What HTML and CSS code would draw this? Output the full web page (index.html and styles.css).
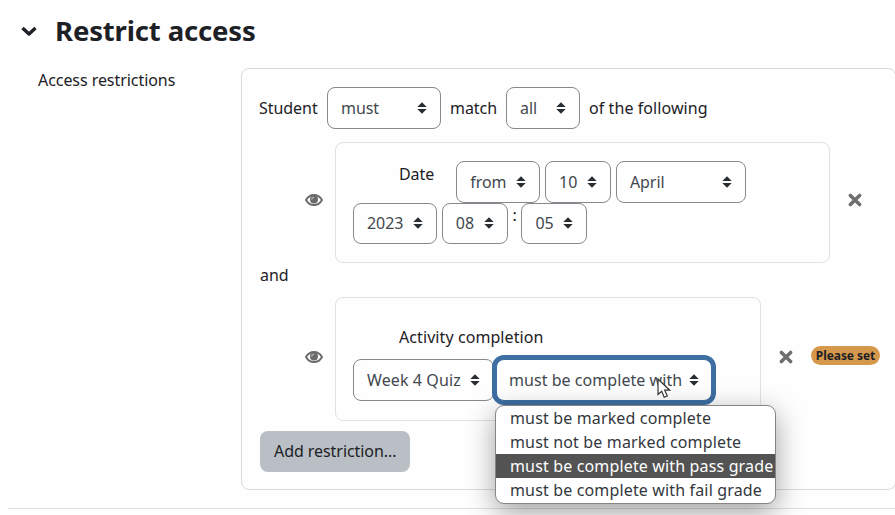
FILE: index.html
```html
<!DOCTYPE html>
<html lang="en">
<head>
<meta charset="utf-8">
<title>Restrict access</title>
<link rel="stylesheet" href="styles.css">
</head>
<body>
<svg class="defs" aria-hidden="true">
  <symbol id="sort" viewBox="0 0 10 12"><path d="M5 .2 9.700 5.100H.3zM5 11.800.3 6.900h9.400z" fill="#292e33"/></symbol>
  <symbol id="eye" viewBox="0 0 18 12"><path d="M1 6C4.800-.7 13.200-.7 17 6C13.200 12.700 4.800 12.700 1 6z" fill="#fefefe" stroke="#6a6a6a" stroke-width="1.900"/><circle cx="9" cy="5.600" r="4" fill="#6a6a6a"/><path d="M6.800 5.500C6.800 4.200 7.700 3.300 9 3.300" fill="none" stroke="#ddd" stroke-width="1"/></symbol>
  <symbol id="times" viewBox="0 0 14 14"><path d="M2.400 2.400l9.200 9.200M11.600 2.400l-9.200 9.200" stroke="#6e6e6e" stroke-width="3.500" stroke-linecap="round"/></symbol>
</svg>
<header class="heading">
  <svg class="chevron" viewBox="0 0 18 12"><path d="M2.500 3 9 9l6.500-6" fill="none" stroke="#1d2125" stroke-width="3.400" stroke-linejoin="round"/></svg>
  <h3>Restrict access</h3>
</header>
<main class="form-row">
  <div class="label">Access restrictions</div>
  <section class="panel">
    <div class="match-row">
      <span class="t-student">Student</span>
      <div class="select must">must<svg><use href="#sort"/></svg></div>
      <span class="t-match">match</span>
      <div class="select all">all<svg><use href="#sort"/></svg></div>
      <span class="t-following">of the following</span>
    </div>
    <div class="condition date">
      <svg class="eye"><use href="#eye"/></svg>
      <div class="box">
        <div class="line">
          <span class="title">Date</span>
          <div class="select from">from<svg><use href="#sort"/></svg></div>
          <div class="select two">10<svg><use href="#sort"/></svg></div>
          <div class="select month">April<svg><use href="#sort"/></svg></div>
        </div>
        <div class="line">
          <div class="select year">2023<svg><use href="#sort"/></svg></div>
          <div class="select two">08<svg><use href="#sort"/></svg></div>
          <span class="colon">:</span>
          <div class="select two">05<svg><use href="#sort"/></svg></div>
        </div>
      </div>
      <svg class="times"><use href="#times"/></svg>
    </div>
    <div class="and">and</div>
    <div class="condition completion">
      <svg class="eye"><use href="#eye"/></svg>
      <div class="box">
        <div class="title">Activity completion</div>
        <div class="line">
          <div class="select quiz">Week 4 Quiz<svg><use href="#sort"/></svg></div>
          <div class="select focus">must be complete with<svg><use href="#sort"/></svg>
            <svg class="cursor" viewBox="0 0 14 21"><path d="M1 1v15.500l3.700-3.300 2.500 6.100 3.100-1.300-2.600-5.800h5z" fill="#fff" stroke="#333" stroke-width="1.200"/></svg>
            <div class="menu">
              <div>must be marked complete</div>
              <div>must not be marked complete</div>
              <div class="active">must be complete with pass grade</div>
              <div>must be complete with fail grade</div>
            </div>
          </div>
        </div>
      </div>
      <svg class="times"><use href="#times"/></svg>
      <span class="badge">Please set</span>
    </div>
    <div class="button">Add restriction...</div>
  </section>
</main>
<hr>
</body>
</html>
```
FILE: styles.css
```css
* { box-sizing: border-box; }
body { margin: 0; height: 515px; overflow: hidden; background: #fefefe; color: #1d2125; font: 16px/24px "Noto Sans", sans-serif; letter-spacing: -.06px; white-space: nowrap; }
svg { flex: none; }
.defs { position: absolute; width: 0; height: 0; }
.heading { display: flex; align-items: center; height: 68px; padding: 0 0 6px 20px; }
.chevron { width: 18px; height: 12px; margin-right: 17px; }
h3 { margin: 0; font-size: 27.500px; line-height: 36px; letter-spacing: -.15px; }
.form-row { display: flex; }
.label { flex: none; width: 241px; padding-left: 38px; }
.panel { width: 655px; height: 422px; flex: none; border: 1px solid #d9dbdd; border-radius: 8px; padding: 18px 0 0 18px; }
.match-row { display: flex; align-items: center; }
.t-student { width: 67px; margin-left: -1px; letter-spacing: -.05px; }
.match-row .must { margin-left: 1px; }
.t-match { width: 65px; padding-left: 9px; }
.t-following { padding-left: 9px; letter-spacing: .08px; }
.select { position: relative; display: flex; align-items: center; justify-content: space-between; height: 42px; border: 1px solid #85898d; border-radius: 8px; padding: 0 13px; color: #42484e; background: #fefefe; flex: none; }
.select > svg:not(.cursor) { width: 10px; height: 12px; }
.must { width: 114px; }
.all { width: 74px; }
.condition { display: flex; align-items: center; }
.date { margin-top: 13px; }
.eye { width: 18px; height: 12px; margin: 0 12px 0 45px; }
.date .eye, .date .times { position: relative; top: -3px; }
.completion .eye, .completion .times { position: relative; top: -2px; }
.box { border: 1px solid #dfe1e3; border-radius: 8px; padding-left: 17px; }
.date .box { width: 495px; height: 121px; padding-top: 18px; }
.line { display: flex; }
.date .line { gap: 4.800px; }
.date .line + .line .select { height: 41px; padding-bottom: 1px; }
.date .title { width: 98.500px; padding: 1px 0 0 46px; }
.from, .year { width: 84px; }
.two { width: 66px; }
.month { width: 130px; }
.colon { width: 4px; text-align: center; }
.times { width: 14px; height: 14px; margin-left: 18px; }
.and { height: 34px; line-height: 25px; }
.completion .box { width: 426px; height: 124px; padding-top: 27px; }
.completion .title { padding-left: 46px; height: 34px; letter-spacing: .08px; }
.quiz { width: 141px; letter-spacing: .1px; }
.focus { width: 216px; margin-left: 2px; border-color: #3d6fa3; box-shadow: 0 0 0 4px #3d6fa3; padding: 0 12px; letter-spacing: .05px; }
.cursor { position: absolute; left: 160px; top: 18px; width: 14px; height: 21px; z-index: 3; }
.menu { position: absolute; left: -2px; top: 45px; width: 281px; height: 99px; padding: 0 0 1px; border: 1px solid #858585; border-radius: 9px; background: #fff; box-shadow: 0 8px 28px rgba(0,0,0,.38); overflow: hidden; z-index: 2; color: #33383d; letter-spacing: .15px; }
.menu div { height: 24px; line-height: 25px; padding-left: 14px; }
.menu .active { background: #535353; color: #fff; }
.badge { width: 69px; height: 19px; margin: -7px 0 0 18px; border-radius: 10px; background: #d6994b; text-align: center; font-size: 12px; font-weight: 700; line-height: 19px; }
.button { width: 150px; height: 41px; margin-top: 10px; border-radius: 8px; padding-left: 14px; line-height: 40px; background: #b9bfc4; }
hr { margin: 18px 0 0 8px; border: 0; height: 1px; background: #dedfe1; }
```
